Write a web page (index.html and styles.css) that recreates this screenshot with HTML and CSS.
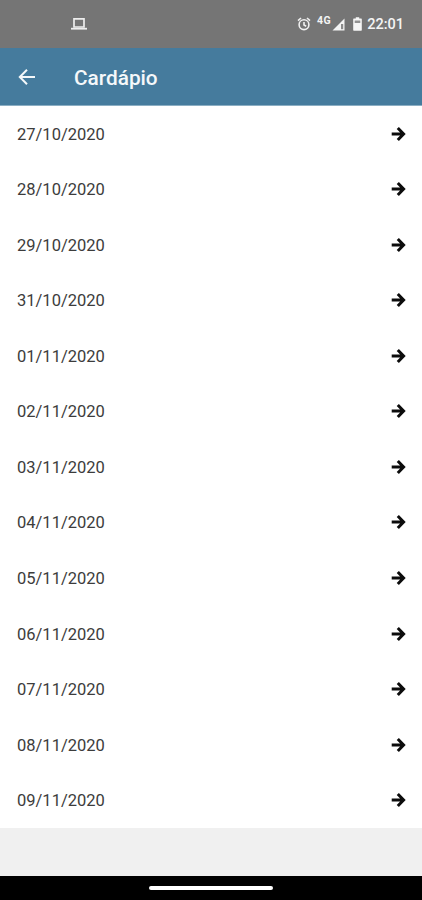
FILE: index.html
```html
<!DOCTYPE html>
<html lang="pt-BR">
<head>
<meta charset="utf-8">
<title>Cardápio</title>
<link rel="stylesheet" href="styles.css">
</head>
<body>
<svg width="0" height="0" class="defs"><symbol id="go" viewBox="0 0 16 16"><path d="M1.7 8H13M7.8 2L13.6 8L7.8 14" fill="none" stroke="#0c0c0c" stroke-width="3"/></symbol></svg>
<div class="screen">
  <div class="status">
    <svg class="laptop" width="18" height="16" viewBox="0 0 18 16"><path d="M4 2.8H14V11H4Z" fill="none" stroke="#eee" stroke-width="1.7"/><path d="M1 11.8H17V13.6H1Z" fill="#eee"/></svg>
    <div class="indicators">
      <svg class="alarm" width="14" height="14" viewBox="0 0 14 14" fill="none" stroke="#f0f0f0" stroke-width="1.6"><circle cx="7" cy="7.7" r="4.9"/><path d="M1 3.6L4 1M13 3.6L10 1M7 5V8L9.2 9.2"/></svg>
      <span class="network">4G</span>
      <svg class="signal" width="13" height="13" viewBox="0 0 13 13"><path d="M12.5 .5V12.5H.5Z" fill="#f4f4f4"/><path d="M9 6H11.2V11.2H9Z" fill="#8b8b8b"/></svg>
      <svg class="battery" width="9" height="14" viewBox="0 0 9 14"><path d="M2.8 .3H6.2V1.6H8.2Q8.8 1.6 8.8 2.3V13Q8.8 13.7 8.2 13.7H.8Q.2 13.7 .2 13V2.3Q.2 1.6 .8 1.6H2.8Z" fill="#f6f6f6"/><path d="M1.7 3.5H7.3V6H1.7Z" fill="#929292"/></svg>
      <span class="clock">22:01</span>
    </div>
  </div>
  <header class="bar">
    <svg class="back" width="18" height="18" viewBox="0 0 18 18"><path d="M17 9H2M9 1.8L1.8 9L9 16.2" fill="none" stroke="#f4f8fa" stroke-width="2"/></svg>
    <h1>Cardápio</h1>
  </header>
  <ul class="list">
    <li><span>27/10/2020</span><svg><use href="#go"/></svg></li>
    <li><span>28/10/2020</span><svg><use href="#go"/></svg></li>
    <li><span>29/10/2020</span><svg><use href="#go"/></svg></li>
    <li><span>31/10/2020</span><svg><use href="#go"/></svg></li>
    <li><span>01/11/2020</span><svg><use href="#go"/></svg></li>
    <li><span>02/11/2020</span><svg><use href="#go"/></svg></li>
    <li><span>03/11/2020</span><svg><use href="#go"/></svg></li>
    <li><span>04/11/2020</span><svg><use href="#go"/></svg></li>
    <li><span>05/11/2020</span><svg><use href="#go"/></svg></li>
    <li><span>06/11/2020</span><svg><use href="#go"/></svg></li>
    <li><span>07/11/2020</span><svg><use href="#go"/></svg></li>
    <li><span>08/11/2020</span><svg><use href="#go"/></svg></li>
    <li><span>09/11/2020</span><svg><use href="#go"/></svg></li>
  </ul>
  <div class="nav"><div class="pill"></div></div>
</div>
</body>
</html>
```
FILE: styles.css
```css
* { box-sizing: border-box; }
body { margin: 0; font-family: Roboto, "Liberation Sans", sans-serif; }
.defs { display: block; }
.screen { display: flex; flex-direction: column; height: 900px; overflow: hidden; background: #f0f0f0; }
.status { display: flex; align-items: center; justify-content: space-between; height: 48px; padding: 0 18px 0 70px; background: #757575; }
.indicators { display: flex; align-items: center; color: #f4f4f4; }
.network { margin: 0 1px 6px 6px; font-size: 10.5px; line-height: 10px; font-weight: 700; letter-spacing: .5px; }
.battery { margin: 0 5px 0 8px; }
.clock { padding-top: 2px; font-size: 14.5px; font-weight: 500; line-height: 18px; }
.bar { display: flex; align-items: center; height: 58px; padding: 0 18px; background: #457b9d; border-bottom: 1px solid #8baec3; }
.bar h1 { margin: 2px 0 0 38px; font-size: 20.8px; line-height: 24px; font-weight: 500; color: #f5f8fa; }
.list { display: flex; flex-direction: column; height: 722px; margin: 0; padding: 0; list-style: none; background: #fff; }
.list li { display: flex; flex: 1; align-items: center; justify-content: space-between; padding: 0 16px 0 17px; font-size: 16.5px; color: #3c3c3c; }
.list span { padding-top: 1px; }
.list svg { width: 16px; height: 16px; }
.nav { display: flex; align-items: center; justify-content: center; height: 24px; margin-top: auto; background: #000; }
.pill { width: 124px; height: 4px; border-radius: 2px; background: #fff; }
```
